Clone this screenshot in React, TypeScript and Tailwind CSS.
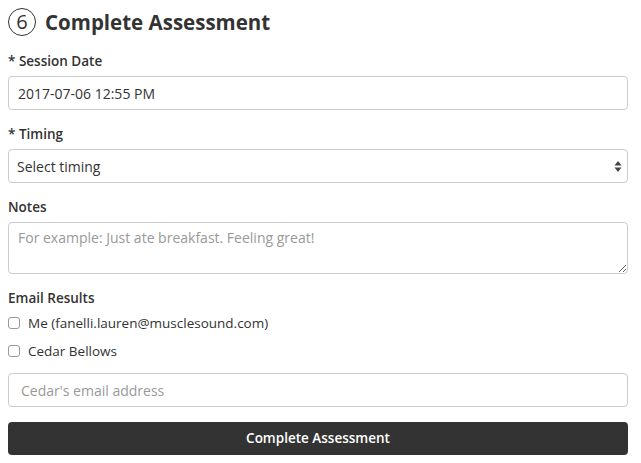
export default function App() {
  return (
    <div className="w-[620px] ml-2 pt-2 text-[#333] font-['Open_Sans',sans-serif]">
      <div className="flex items-center h-[28px]">
        <span className="w-[28px] h-[28px] rounded-full border-[1.5px] border-[#333] flex items-center justify-center text-[20px] leading-none">
          6
        </span>
        <h1 className="ml-[9px] text-[20.5px] font-bold leading-none">Complete Assessment</h1>
      </div>

      <label className="block mt-[16px] text-[13.5px] font-semibold leading-[18px]">* Session Date</label>
      <input
        className="mt-[6px] block w-full h-[34px] px-[9px] border border-[#ccc] rounded-[4px] text-[14px] text-[#333] outline-none"
        defaultValue="2017-07-06 12:55 PM"
      />

      <label className="block mt-[15px] text-[13.5px] font-semibold leading-[18px]">* Timing</label>
      <div className="relative mt-[6px] h-[34px] border border-[#ccc] rounded-[4px] flex items-center px-[8px] text-[14px]">
        Select timing
        <svg className="absolute right-[5px] top-[10px]" width="8" height="13" viewBox="0 0 8 13">
          <path d="M4 1 L7.5 5.5 H0.5 Z" fill="#444" />
          <path d="M4 12 L7.5 7.5 H0.5 Z" fill="#444" />
        </svg>
      </div>

      <label className="block mt-[15px] text-[13.5px] font-semibold leading-[18px]">Notes</label>
      <textarea
        className="mt-[6px] block w-full h-[52px] px-[9px] py-[6px] border border-[#ccc] rounded-[4px] text-[14px] leading-[18px] placeholder-[#999] outline-none"
        placeholder="For example: Just ate breakfast. Feeling great!"
      />

      <label className="block mt-[15px] text-[13.5px] font-semibold leading-[18px]">Email Results</label>
      <div className="mt-[7px] flex items-center h-[18px] text-[13.5px]">
        <span className="w-[12px] h-[12px] border border-[#999] rounded-[3px] bg-white" />
        <span className="ml-[8px]">Me (fanelli.lauren@musclesound.com)</span>
      </div>
      <div className="mt-[10px] flex items-center h-[18px] text-[13.5px]">
        <span className="w-[12px] h-[12px] border border-[#999] rounded-[3px] bg-white" />
        <span className="ml-[8px]">Cedar Bellows</span>
      </div>
      <input
        className="mt-[13px] block w-full h-[34px] px-[12px] border border-[#ccc] rounded-[4px] text-[14px] placeholder-[#999] outline-none"
        placeholder="Cedar's email address"
      />

      <button className="mt-[15px] block w-full h-[33px] bg-[#333] text-white rounded-[4px] text-[13.5px] font-semibold">
        Complete Assessment
      </button>
    </div>
  );
}
